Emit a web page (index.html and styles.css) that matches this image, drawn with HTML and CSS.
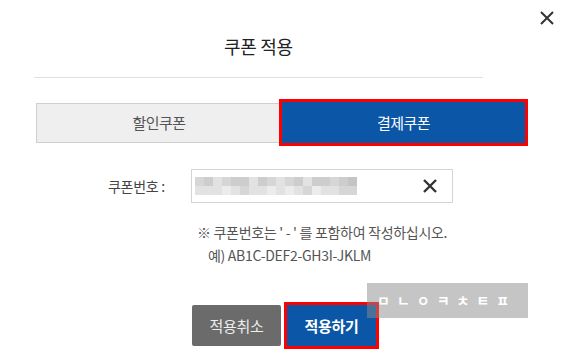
FILE: index.html
```html
<!doctype html>
<html>
<head>
<meta charset="utf-8">
<title>쿠폰 적용</title>
<link rel="stylesheet" href="styles.css">
</head>

<body>
<div class="modal">
    <a class="close">
        <svg width="14" height="14" viewBox="0 0 14 14"><path d="M1 1L13 13M13 1L1 13" stroke="#333" stroke-width="2"/></svg>
    </a>

    <h2 class="title">쿠폰 적용</h2>
    <div class="line"></div>

    <div class="tabs">
        <span class="tab">할인쿠폰</span>
        <span class="tab on">결제쿠폰</span>
    </div>

    <div class="field">
        <label>쿠폰번호 :</label>
        <div class="input">
            <div class="blur">
                <i class="c2"></i><i class="c3"></i><i class="c1"></i><i class="c2"></i><i class="c3"></i><i class="c3"></i><i class="c1"></i><i class="c3"></i><i class="c2"></i><i class="c1"></i><i class="c2"></i><i class="c3"></i><i class="c1"></i><i class="c3"></i><i class="c3"></i><i class="c2"></i><i class="c3"></i><i class="c4"></i>
                <i class="c1"></i><i class="c1"></i><i class="c1"></i><i class="c0"></i><i class="c1"></i><i class="c2"></i><i class="c1"></i><i class="c1"></i><i class="c0"></i><i class="c1"></i><i class="c0"></i><i class="c1"></i><i class="c2"></i><i class="c0"></i><i class="c1"></i><i class="c1"></i><i class="c2"></i><i class="c2"></i>
            </div>
            <svg class="clear" width="14" height="14" viewBox="0 0 14 14"><path d="M1 1L13 13M13 1L1 13" stroke="#333" stroke-width="2.4"/></svg>
        </div>
    </div>

    <div class="note">
        <p>※ 쿠폰번호는 ' - ' 를 포함하여 작성하십시오.</p>
        <p class="ex">예) AB1C-DEF2-GH3I-JKLM</p>
    </div>

    <div class="btns">
        <span class="btn gray">적용취소</span>
        <span class="btn blue">적용하기</span>
    </div>

    <div class="ime">ㅁㄴㅇㅋㅊㅌㅍ</div>
</div>
</body>
</html>
```

FILE: styles.css
```css
html,body { padding:0; margin:0; background:#fff;}
body { font-family:"Noto Sans CJK KR", "Liberation Sans", sans-serif; color:#333;}
.modal { position:relative; width:568px; height:358px; overflow:hidden; padding-top:34px; box-sizing:border-box;}
.close { position:absolute; left:540px; top:11px; width:14px; height:14px; cursor:pointer;}
.close svg { display:block;}

.title { margin:0; width:517px; text-align:center; font-size:18px; font-weight:normal; line-height:24px; color:#222; letter-spacing:-0.3px;}
.line { margin:19px 0 0 34px; width:449px; height:1px; background:#e0e0e0;}

.tabs { display:flex; align-items:flex-end; margin:24px 0 0 36px; width:489px;}
.tab { box-sizing:border-box; height:40px; line-height:38px; text-align:center; font-size:15px; letter-spacing:-0.5px;}
.tab:first-child { width:246px; border:1px solid #cfcfcf; background:#efefef; color:#555;}
.tab.on { width:243px; height:41px; line-height:41px; background:#0b56a6; color:#fff; outline:3px solid #f00;}

.field { display:flex; align-items:center; margin:26px 0 0 108px;}
.field label { width:83px; font-size:14px; color:#444; letter-spacing:-0.3px;}
.input { box-sizing:border-box; display:flex; align-items:center; justify-content:space-between; width:262px; height:34px; border:1px solid #d4d4d4; padding:0 15px 0 3px;}
.blur { display:grid; grid-template-columns:repeat(18, 9px); grid-auto-rows:9px;}
.blur i { display:block;}
.c0 { background:#ececec;}
.c1 { background:#e2e2e2;}
.c2 { background:#d6d6d6;}
.c3 { background:#cdcdcd;}
.c4 { background:#c4c4c4;}
.clear { display:block;}

.note { margin:18px 0 0 197px; font-size:14px; line-height:23px; color:#555; letter-spacing:-0.3px;}
.note p { margin:0;}
.note .ex { padding-left:11px;}

.btns { display:flex; gap:6px; margin:38px 0 0 192px;}
.btn { width:89px; height:41px; line-height:41px; text-align:center; font-size:15px; letter-spacing:-0.3px;}
.gray { background:#6b6b6b; color:#eee; border-radius:2px;}
.blue { background:#0b56a6; color:#fff; font-weight:bold; outline:3px solid #f00;}

.ime { position:absolute; left:367px; top:283px; width:161px; height:35px; box-sizing:border-box; padding-left:10px; line-height:35px; background:rgba(140,140,140,0.5); color:#fff; font-size:14px; font-weight:bold; letter-spacing:7px; white-space:nowrap;}
```
